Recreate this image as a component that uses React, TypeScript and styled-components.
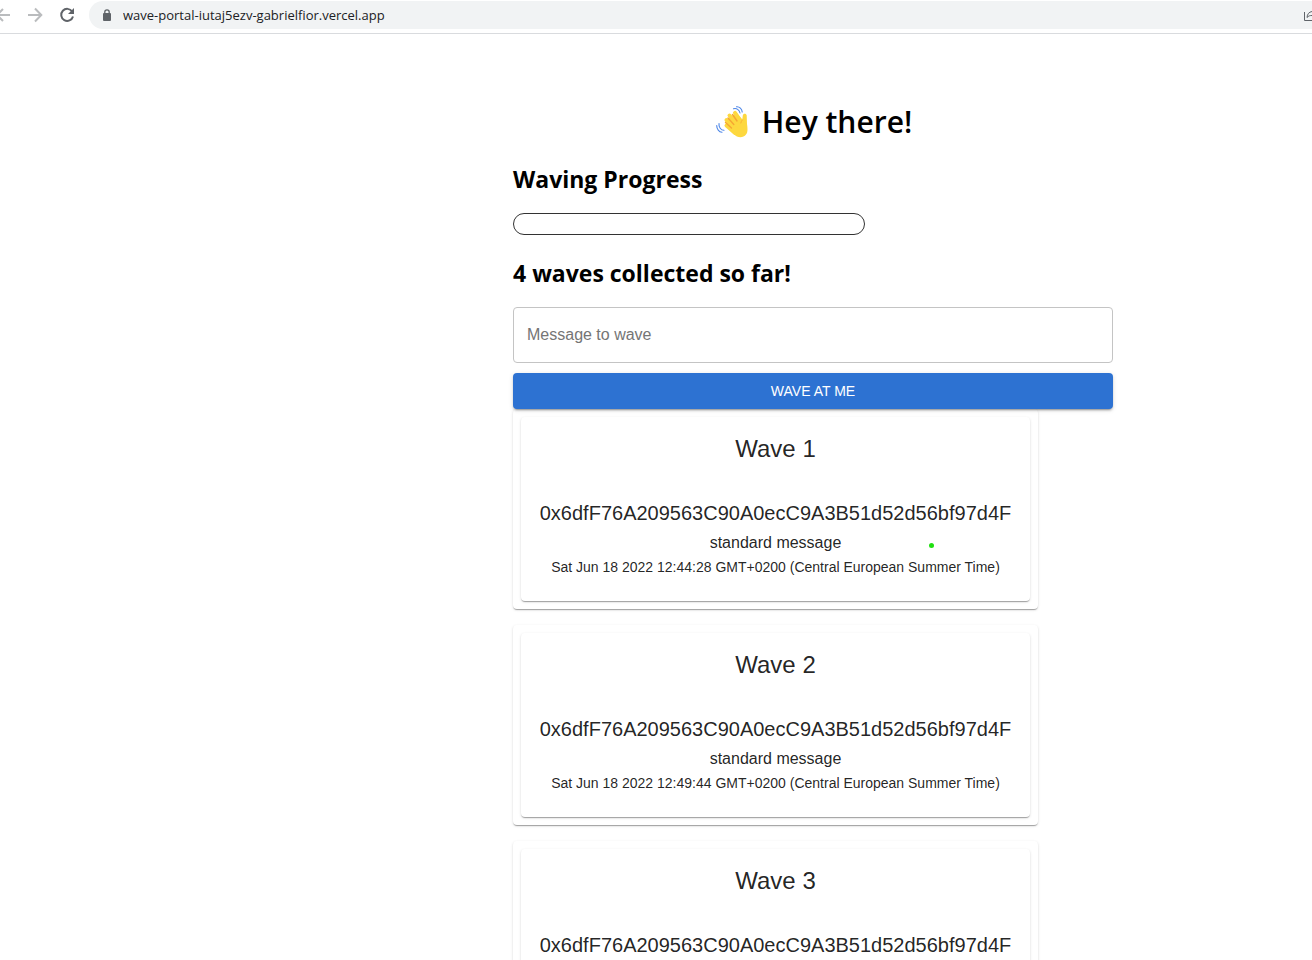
import React from "react";
import styled, { createGlobalStyle } from "styled-components";

const GlobalStyle = createGlobalStyle`
  * { box-sizing: border-box; }
  body {
    margin: 0;
    background: #fff;
    color: #000;
    font-family: "Open Sans", "Noto Sans", sans-serif;
  }
`;

const Screen = styled.div`
  height: 100vh;
  overflow: hidden;
`;

const Toolbar = styled.header`
  display: flex;
  align-items: flex-start;
  height: 34px;
  padding-top: 1px;
  border-bottom: 1px solid #d9dbde;
`;

const NavButton = styled.button<{ $width: number; $color: string }>`
  display: flex;
  justify-content: flex-end;
  align-items: center;
  flex: none;
  width: ${(p) => p.$width}px;
  height: 28px;
  padding: 0;
  border: 0;
  background: none;
  color: ${(p) => p.$color};
`;

const AddressBar = styled.div`
  display: flex;
  align-items: center;
  flex: 1;
  min-width: 0;
  height: 28px;
  margin-left: 14px;
  padding-left: 14px;
  border-radius: 14px 0 0 14px;
  background: #f1f3f4;
  color: #5f6368;
`;

const Url = styled.input`
  flex: 1;
  min-width: 0;
  margin-left: 12px;
  padding: 0;
  border: 0;
  outline: 0;
  background: none;
  color: #202124;
  font: 13px/20px "Open Sans", "Noto Sans", sans-serif;
`;

const Page = styled.main`
  display: grid;
  grid-template-columns: 513fr minmax(0, 600px) 199fr;
  padding-top: 66px;
`;

const Column = styled.div`
  grid-column: 2;
  display: flex;
  flex-direction: column;
`;

const Title = styled.h1`
  display: flex;
  justify-content: center;
  align-items: center;
  gap: 14px;
  margin: 0 0 20px;
  font-size: 30px;
  line-height: 43px;
  font-weight: 600;
`;

const Subtitle = styled.h2`
  margin: 0 0 18px;
  font-size: 23px;
  line-height: 32px;
  font-weight: 700;
`;

const ProgressTrack = styled.div`
  width: 352px;
  max-width: 100%;
  height: 22px;
  margin-bottom: 22px;
  border: 1px solid #333;
  border-radius: 11px;
`;

const MessageInput = styled.input`
  width: 100%;
  height: 56px;
  margin-bottom: 10px;
  padding: 0 13px;
  border: 1px solid #c4c4c4;
  border-radius: 4px;
  background: #fff;
  font: 16px/24px "Liberation Sans", Arial, sans-serif;
  &::placeholder { color: #757575; opacity: 1; }
`;

const WaveButton = styled.button`
  position: relative;
  height: 36px;
  padding: 0 16px;
  border: 0;
  border-radius: 4px;
  background: #2d72d2;
  color: #fff;
  font: 14px/24px "Liberation Sans", Arial, sans-serif;
  text-transform: uppercase;
  box-shadow: 0 3px 1px -2px rgba(0, 0, 0, 0.2), 0 2px 2px 0 rgba(0, 0, 0, 0.14),
    0 1px 5px 0 rgba(0, 0, 0, 0.12);
`;

const WaveList = styled.div`
  display: flex;
  flex-direction: column;
  gap: 16px;
  width: 525px;
  max-width: 100%;
`;

const Paper = styled.div`
  border-radius: 4px;
  background: #fff;
  box-shadow: 0 2px 1px -1px rgba(0, 0, 0, 0.2), 0 1px 1px 0 rgba(0, 0, 0, 0.14),
    0 1px 3px 0 rgba(0, 0, 0, 0.12);
`;

const OuterCard = styled(Paper)`
  padding: 8px;
`;

const InnerCard = styled(Paper)`
  position: relative;
  min-height: 184px;
  padding: 16px 0 24px;
  color: rgba(0, 0, 0, 0.87);
  font-family: "Liberation Sans", Arial, sans-serif;
  text-align: center;
`;

const WaveName = styled.h3`
  margin: 0 0 32px;
  font-size: 24px;
  line-height: 32px;
  font-weight: 400;
`;

const Sender = styled.div`
  font-size: 20px;
  line-height: 32px;
`;

const Message = styled.div`
  font-size: 16px;
  line-height: 28px;
`;

const Timestamp = styled.div`
  font-size: 14px;
  line-height: 20px;
`;

const Dot = styled.span`
  position: absolute;
  top: 126px;
  right: 96px;
  width: 5px;
  height: 5px;
  border-radius: 50%;
  background: #1fe010;
`;

interface Wave {
  name: string;
  sender: string;
  message?: string;
  time?: string;
  marked?: boolean;
}

const SENDER = "0x6dfF76A209563C90A0ecC9A3B51d52d56bf97d4F";

const waves: Wave[] = [
  {
    name: "Wave 1",
    sender: SENDER,
    message: "standard message",
    time: "Sat Jun 18 2022 12:44:28 GMT+0200 (Central European Summer Time)",
    marked: true,
  },
  {
    name: "Wave 2",
    sender: SENDER,
    message: "standard message",
    time: "Sat Jun 18 2022 12:49:44 GMT+0200 (Central European Summer Time)",
  },
  { name: "Wave 3", sender: SENDER },
];

const WavingHand = () => (
  <svg width="34" height="32" viewBox="-2 0 34 32" fill="none" strokeLinecap="round" aria-hidden="true">
    <path
      d="M10 19 L18 28 C21 32 27 32.500 30 28.500 C32 26 31.600 22 31 18 L30.700 9.500 C30.500 7 27 7 26.800 9.500 L26.300 13.500 L20 7 L12 13Z"
      fill="#fdd83f"
    />
    <g stroke="#fdd83f" strokeWidth="4">
      <path d="M10.500 19.500 L19 27" />
      <path d="M10.500 14 L20 24" />
      <path d="M13.500 9.500 L23 21" />
      <path d="M19 6.800 L26 17" />
    </g>
    <g stroke="#f6a733" strokeWidth="1.400">
      <path d="M9.500 16.500 L15.500 22" />
      <path d="M12 12 L17.800 18.500" />
      <path d="M16.500 8.500 L21 15" />
      <path d="M26.300 14 C25.500 15 25 16 24.800 17" strokeWidth="0.800" />
    </g>
    <g stroke="#4c86e8" strokeWidth="1.100">
      <path d="M17.500 2.800 C20.500 1.800 23.500 4 24 7" />
      <path d="M20.500 0.800 C23.500 0.500 26 3 26.200 6" />
      <path d="M3 17.500 C2.500 21 5 24.300 8 24.300" />
      <path d="M0.700 19.500 C0.700 23 3 26 6 26.300" />
    </g>
  </svg>
);

const BackIcon = () => (
  <svg width="10" height="16" viewBox="6 0 10 16" fill="none" stroke="currentColor" strokeWidth="2" aria-hidden="true">
    <path d="M16 8 H3 M9 2 L3 8 L9 14" />
  </svg>
);

const ForwardIcon = () => (
  <svg width="16" height="16" viewBox="0 0 16 16" fill="none" stroke="currentColor" strokeWidth="2" aria-hidden="true">
    <path d="M1 8 H14 M8 1.500 L14.300 8 L8 14.500" />
  </svg>
);

const ReloadIcon = () => (
  <svg width="16" height="16" viewBox="0 0 16 16" fill="none" aria-hidden="true">
    <path d="M13.200 4.500 A6 6 0 1 0 14 9.500" stroke="currentColor" strokeWidth="2" />
    <path d="M15 1 V7 H9Z" fill="currentColor" />
  </svg>
);

const LockIcon = () => (
  <svg width="8" height="12" viewBox="0 0 8 12" fill="none" aria-hidden="true">
    <rect y="4" width="8" height="8" rx="1" fill="currentColor" />
    <path d="M1.800 4.500 V3 A2.200 2.200 0 0 1 6.200 3 V4.500" stroke="currentColor" strokeWidth="1.300" />
  </svg>
);

const ShareIcon = () => (
  <svg width="8" height="12" viewBox="0 0 8 12" fill="none" stroke="currentColor" aria-hidden="true">
    <path d="M0.500 3 V11.500 H8" />
    <path d="M3 8.500 C3.300 5 5 3 8 2.500 M3 8.500 C4.500 6.800 6 6.500 8 6.500" />
  </svg>
);

export default function App() {
  return (
    <Screen>
      <GlobalStyle />
      <Toolbar>
        <NavButton $width={10} $color="#babcbe" aria-label="Back">
          <BackIcon />
        </NavButton>
        <NavButton $width={33} $color="#babcbe" aria-label="Forward">
          <ForwardIcon />
        </NavButton>
        <NavButton $width={32} $color="#5f6368" aria-label="Reload">
          <ReloadIcon />
        </NavButton>
        <AddressBar>
          <LockIcon />
          <Url aria-label="Address" defaultValue="wave-portal-iutaj5ezv-gabrielfior.vercel.app" />
          <ShareIcon />
        </AddressBar>
      </Toolbar>
      <Page>
        <Column>
          <Title>
            <WavingHand />
            Hey there!
          </Title>
          <Subtitle>Waving Progress</Subtitle>
          <ProgressTrack role="progressbar" aria-label="Waving Progress" />
          <Subtitle>4 waves collected so far!</Subtitle>
          <MessageInput aria-label="Message to wave" placeholder="Message to wave" />
          <WaveButton>Wave at me</WaveButton>
          <WaveList>
            {waves.map((wave) => (
              <OuterCard key={wave.name}>
                <InnerCard>
                  <WaveName>{wave.name}</WaveName>
                  <Sender>{wave.sender}</Sender>
                  {wave.message && <Message>{wave.message}</Message>}
                  {wave.time && <Timestamp>{wave.time}</Timestamp>}
                  {wave.marked && <Dot />}
                </InnerCard>
              </OuterCard>
            ))}
          </WaveList>
        </Column>
      </Page>
    </Screen>
  );
}
